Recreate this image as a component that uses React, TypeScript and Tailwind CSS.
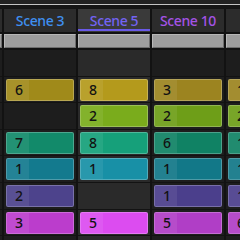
import React from "react";

type Clip = { n: string; c: string } | null;
type Col = { title: string; tc: string; sel: boolean; slotBg: string; clips: Clip[] };

const heights = [27, 26, 27, 26, 27, 27, 26, 27];

const cols: Col[] = [
  { title: "", tc: "", sel: false, slotBg: "#1d1d1d", clips: [null, null, null, null, null, null, null, null] },
  {
    title: "Scene 3",
    tc: "#3f8ff0",
    sel: false,
    slotBg: "#1d1d1d",
    clips: [
      null,
      { n: "6", c: "#a08a1a" },
      null,
      { n: "7", c: "#128a6a" },
      { n: "1", c: "#137a8e" },
      { n: "2", c: "#4d438c" },
      { n: "3", c: "#bb3dcc" },
      null,
    ],
  },
  {
    title: "Scene 5",
    tc: "#7363f2",
    sel: true,
    slotBg: "#2a2a2a",
    clips: [
      null,
      { n: "8", c: "#b49a1c" },
      { n: "2", c: "#7aac1c" },
      { n: "8", c: "#16a07a" },
      { n: "1", c: "#1890a6" },
      null,
      { n: "5", c: "#dc4cf0" },
      null,
    ],
  },
  {
    title: "Scene 10",
    tc: "#a453e6",
    sel: false,
    slotBg: "#1d1d1d",
    clips: [
      null,
      { n: "3", c: "#9c8420" },
      { n: "2", c: "#6e9e18" },
      { n: "6", c: "#108264" },
      { n: "1", c: "#127888" },
      { n: "1", c: "#4b3f8c" },
      { n: "5", c: "#b03ec6" },
      null,
    ],
  },
  {
    title: "",
    tc: "#a453e6",
    sel: false,
    slotBg: "#1d1d1d",
    clips: [
      null,
      { n: "1", c: "#9c8420" },
      { n: "2", c: "#6e9e18" },
      { n: "1", c: "#108264" },
      { n: "1", c: "#127888" },
      { n: "1", c: "#4b3f8c" },
      { n: "6", c: "#b03ec6" },
      null,
    ],
  },
];

function Column({ col }: { col: Col }) {
  return (
    <div className="w-[74px] shrink-0 px-[1px] flex flex-col">
      <div
        className="h-[23px] flex flex-col"
        style={{ backgroundColor: col.sel ? "#3a3a3a" : "#2c2c2c" }}
      >
        <div
          className="flex-1 flex items-center justify-center text-[14px] font-medium tracking-[-0.4px] leading-none pt-[3px]"
          style={{ color: col.tc, fontFamily: '"Noto Sans", sans-serif' }}
        >
          {col.title}
        </div>
        <div className="h-[2px]" style={{ backgroundColor: col.sel ? "#6a5ae8" : "transparent" }} />
        <div className="h-[1px]" />
      </div>
      <div className="mt-[2px] h-[14px] bg-[#9e9e9e] border border-[#b8b8b8] border-b-[#6e6e6e] border-r-[#6e6e6e]" />
      <div className="mt-[2px] flex flex-col">
        {heights.map((h, i) => {
          const clip = col.clips[i];
          return (
            <div
              key={i}
              className="border-b border-[#131313] pt-[2px] px-[2px]"
              style={{ height: h, backgroundColor: col.slotBg }}
            >
              {clip && (
                <div
                  className="h-[22px] rounded-[2px] border border-white/25 flex overflow-hidden"
                  style={{ backgroundColor: clip.c }}
                >
                  <div
                    className="w-[22px] h-full bg-white/[0.07] pl-[8px] flex items-center text-[14px] font-medium leading-none text-[#121212]"
                    style={{ fontFamily: '"Noto Sans", sans-serif' }}
                  >
                    {clip.n}
                  </div>
                </div>
              )}
            </div>
          );
        })}
      </div>
    </div>
  );
}

export default function App() {
  return (
    <div className="w-[240px] h-[240px] overflow-hidden bg-[#121212] flex flex-col">
      <div className="h-[4px] bg-[#222222] shrink-0" />
      <div className="h-[1px] bg-[#c4c4c4] shrink-0" />
      <div className="h-[4px] bg-[#151515] shrink-0" />
      <div className="flex ml-[-71px]">
        {cols.map((c, i) => (
          <Column key={i} col={c} />
        ))}
      </div>
    </div>
  );
}
